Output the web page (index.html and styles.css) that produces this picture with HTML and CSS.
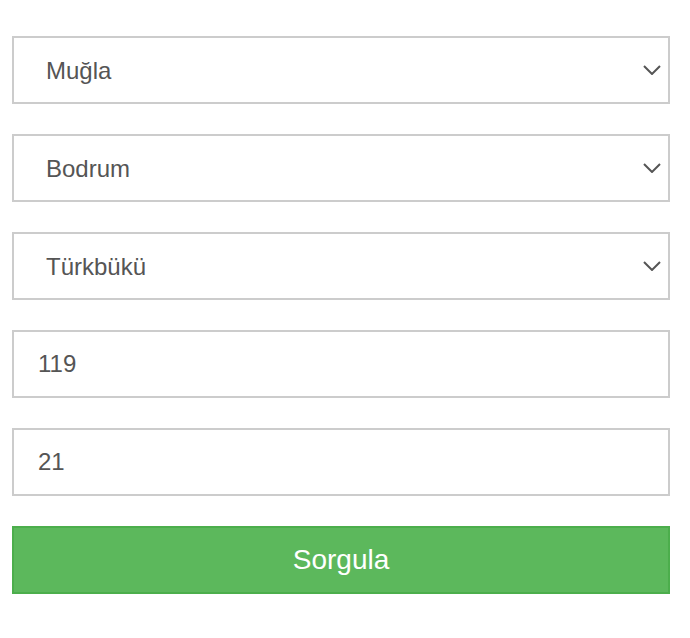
FILE: index.html
```html
<!DOCTYPE html>
<html lang="tr">
<head>
  <meta charset="UTF-8">
  <meta name="viewport" content="width=device-width, initial-scale=1.0">
  <title>Sorgula</title>
  <link rel="stylesheet" href="styles.css">
</head>
<body>
  <form class="query-form" onsubmit="return false;">
    <div class="select-wrap">
      <select class="field select-field">
        <option>Muğla</option>
      </select>
      <svg class="chevron" width="18" height="10" viewBox="0 0 18 10"><path d="M1 1l8 8 8-8" fill="none" stroke="#555" stroke-width="2"/></svg>
    </div>
    <div class="select-wrap">
      <select class="field select-field">
        <option>Bodrum</option>
      </select>
      <svg class="chevron" width="18" height="10" viewBox="0 0 18 10"><path d="M1 1l8 8 8-8" fill="none" stroke="#555" stroke-width="2"/></svg>
    </div>
    <div class="select-wrap">
      <select class="field select-field">
        <option>Türkbükü</option>
      </select>
      <svg class="chevron" width="18" height="10" viewBox="0 0 18 10"><path d="M1 1l8 8 8-8" fill="none" stroke="#555" stroke-width="2"/></svg>
    </div>
    <input class="field text-field" type="text" value="119">
    <input class="field text-field" type="text" value="21">
    <button class="submit-btn" type="submit">Sorgula</button>
  </form>
</body>
</html>
```

FILE: styles.css
```css
body {
  margin: 0;
  font-family: "Liberation Sans", Arial, sans-serif;
  background: #fff;
}

.query-form {
  display: flex;
  flex-direction: column;
  gap: 30px;
  padding: 36px 20px 0 12px;
}

.select-wrap {
  position: relative;
}

.field {
  display: block;
  box-sizing: border-box;
  width: 100%;
  height: 68px;
  margin: 0;
  border: 2px solid #ccc;
  border-radius: 0;
  background: #fff;
  color: #555;
  font-family: "Liberation Sans", Arial, sans-serif;
  font-size: 24px;
  outline: none;
}

.select-field {
  -webkit-appearance: none;
  appearance: none;
  padding: 0 50px 0 32px;
}

.text-field {
  padding: 0 24px;
}

.chevron {
  position: absolute;
  right: 9px;
  top: 29px;
  pointer-events: none;
}

.submit-btn {
  box-sizing: border-box;
  width: 100%;
  height: 68px;
  border: 2px solid #4cae4c;
  background-color: #5cb85c;
  color: #fff;
  font-family: "Liberation Sans", Arial, sans-serif;
  font-size: 28px;
  cursor: pointer;
}
```
